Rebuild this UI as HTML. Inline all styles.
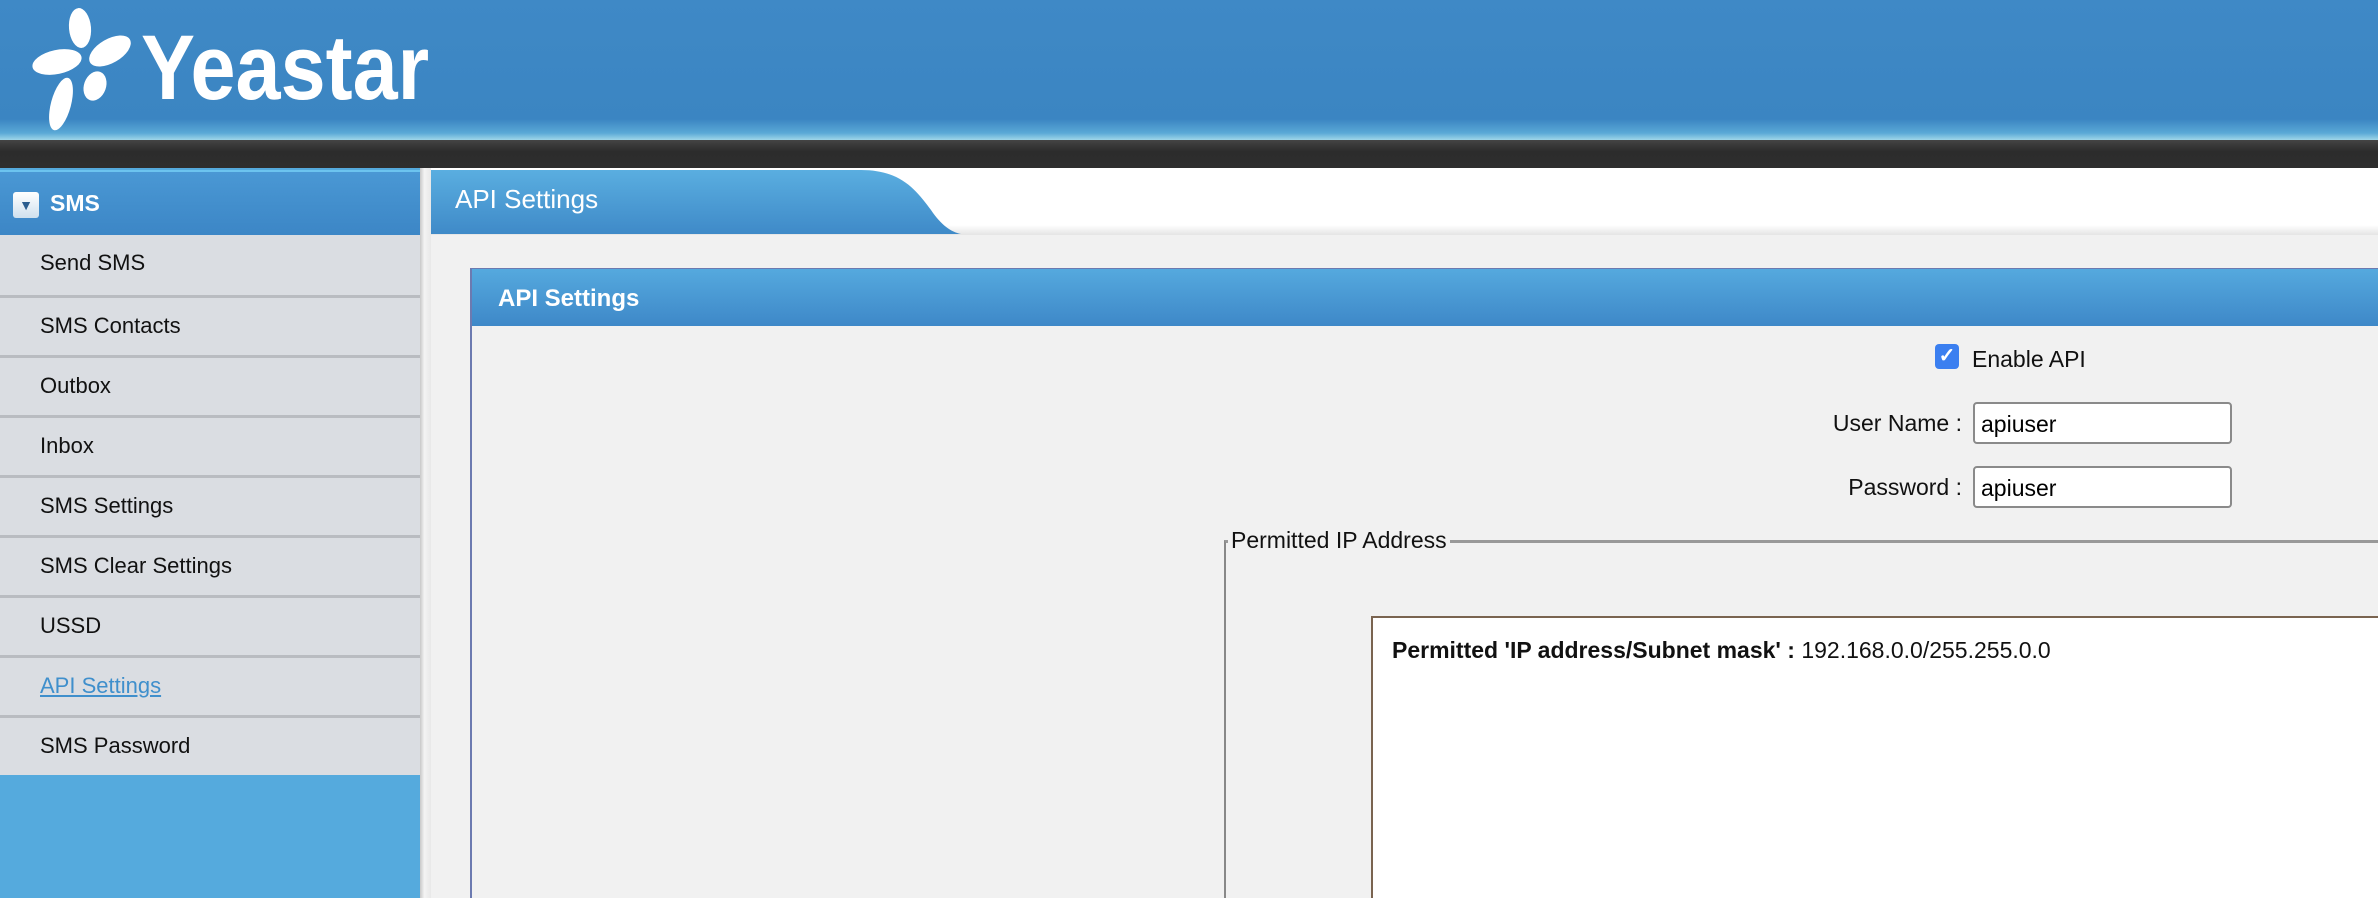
<!DOCTYPE html>
<html style="overflow:hidden"><head><meta charset="utf-8"><style>
*{margin:0;padding:0;box-sizing:border-box}
html,body{width:2378px;height:898px;overflow:hidden}
body{background:#f1f1f1;font-family:"Liberation Sans",Arial,sans-serif;position:relative}
.hdr{position:absolute;left:0;top:0;width:2378px;height:140px;background:linear-gradient(#3f89c6,#3b85c2 85%,#5aa9d6 95%,#9fd6e8)}
.bar{position:absolute;left:0;top:140px;width:2378px;height:28px;background:linear-gradient(#444,#2c2c2c 40%,#2e2e2e)}
.logo{position:absolute;left:141px;top:22px;color:#fff;font-size:92px;font-weight:bold;letter-spacing:0px;transform:scaleX(0.88);transform-origin:0 0;line-height:1}
.side{position:absolute;left:0;top:168px;width:420px;height:730px;background:#55aadd}
.smsh{position:absolute;left:0;top:170px;width:420px;height:65px;background:linear-gradient(#4a98d4,#3c86c6);border-top:2px solid #6cc4ef;color:#fff;font-weight:bold;font-size:23px;padding:18px 0 0 50px}
.smsh i{position:absolute;left:13px;top:20px;width:26px;height:26px;background:linear-gradient(#fff,#cfe0ee);border-radius:3px;color:#2a5d8f;font-style:normal;font-size:14px;text-align:center;line-height:27px}
.item{position:absolute;left:0;width:420px;height:60px;background:#dadde2;border-top:3px solid #b9bcc1;font-size:22px;color:#111;padding:15px 0 0 40px}
.item.a{color:#3f8fcc;text-decoration:underline}
.gap{position:absolute;left:420px;top:168px;width:11px;height:730px;background:linear-gradient(90deg,#c8c8c8,#f4f4f4 40%,#e8e8e8)}
.tabbar{position:absolute;left:431px;top:168px;width:1947px;height:67px;background:linear-gradient(#fff,#fff 85%,#e4e4e4)}
.tabt{position:absolute;left:455px;top:184px;color:#fff;font-size:26px}
.panel{position:absolute;left:470px;top:268px;width:1908px;height:630px;border-left:2px solid #6c7ab0;border-top:1px solid #6c7ab0}
.ph{height:57px;background:linear-gradient(#55a9de,#3e88c8);color:#fff;font-weight:bold;font-size:24px;padding:16px 0 0 26px}
.t{position:absolute;font-size:23px;color:#111}
.inp{position:absolute;left:1973px;width:259px;height:42px;background:#fff;border:2px solid #8a8a8a;border-radius:4px;font-size:23px;padding:7px 0 0 6px}
.fs{position:absolute;left:1224px;top:540px;width:1154px;height:358px;border-left:2px solid #888;border-top:3px solid #999}
.box{position:absolute;left:1371px;top:616px;width:1007px;height:282px;background:#fff;border:2px solid #7a6450;border-bottom:none;border-right:none}
</style></head><body>
<div class="hdr"></div>
<svg style="position:absolute;left:0;top:0" width="150" height="140">
<g fill="#fff">
<ellipse cx="80" cy="28" rx="11" ry="20" transform="rotate(-5 80 28)"/>
<ellipse cx="110" cy="51" rx="23" ry="12" transform="rotate(-30 110 51)"/>
<ellipse cx="57" cy="62" rx="25" ry="12" transform="rotate(-12 57 62)"/>
<ellipse cx="95" cy="86" rx="11" ry="15" transform="rotate(20 95 86)"/>
<ellipse cx="61" cy="104" rx="10" ry="27" transform="rotate(15 61 104)"/>
</g></svg>
<div class="logo">Yeastar</div>
<div class="bar"></div>
<div class="side"></div>
<div class="smsh"><i>▼</i>SMS</div>
<div class="item" style="top:235px;border-top:none">Send SMS</div>
<div class="item" style="top:295px">SMS Contacts</div>
<div class="item" style="top:355px">Outbox</div>
<div class="item" style="top:415px">Inbox</div>
<div class="item" style="top:475px">SMS Settings</div>
<div class="item" style="top:535px">SMS Clear Settings</div>
<div class="item" style="top:595px">USSD</div>
<div class="item a" style="top:655px">API Settings</div>
<div class="item" style="top:715px">SMS Password</div>
<div class="gap"></div>
<div class="tabbar"></div>
<svg style="position:absolute;left:431px;top:170px" width="540" height="66">
<defs><linearGradient id="g" x1="0" y1="0" x2="0" y2="1"><stop offset="0" stop-color="#5aaee0"/><stop offset="1" stop-color="#3f8ac8"/></linearGradient></defs>
<path d="M0 0H430C470 0 485 20 500 40C510 55 520 62 530 64H0Z" fill="url(#g)"/></svg>
<div class="tabt">API Settings</div>
<div class="panel"><div class="ph">API Settings</div></div>
<div style="position:absolute;left:1935px;top:344px;width:24px;height:25px;background:#3b7ff0;border-radius:4px;color:#fff;font-size:20px;text-align:center;line-height:25px;font-weight:bold">✓</div>
<div class="t" style="left:1972px;top:346px">Enable API</div>
<div class="t" style="left:1812px;top:410px;width:150px;text-align:right">User Name :</div>
<div class="inp" style="top:402px">apiuser</div>
<div class="t" style="left:1812px;top:474px;width:150px;text-align:right">Password :</div>
<div class="inp" style="top:466px">apiuser</div>
<div class="fs"></div>
<div class="t" style="left:1228px;top:527px;background:#f1f1f1;padding:0 3px">Permitted IP Address</div>
<div class="box"></div>
<div class="t" style="left:1392px;top:637px"><b>Permitted 'IP address/Subnet mask' :</b> 192.168.0.0/255.255.0.0</div>
</body></html>
